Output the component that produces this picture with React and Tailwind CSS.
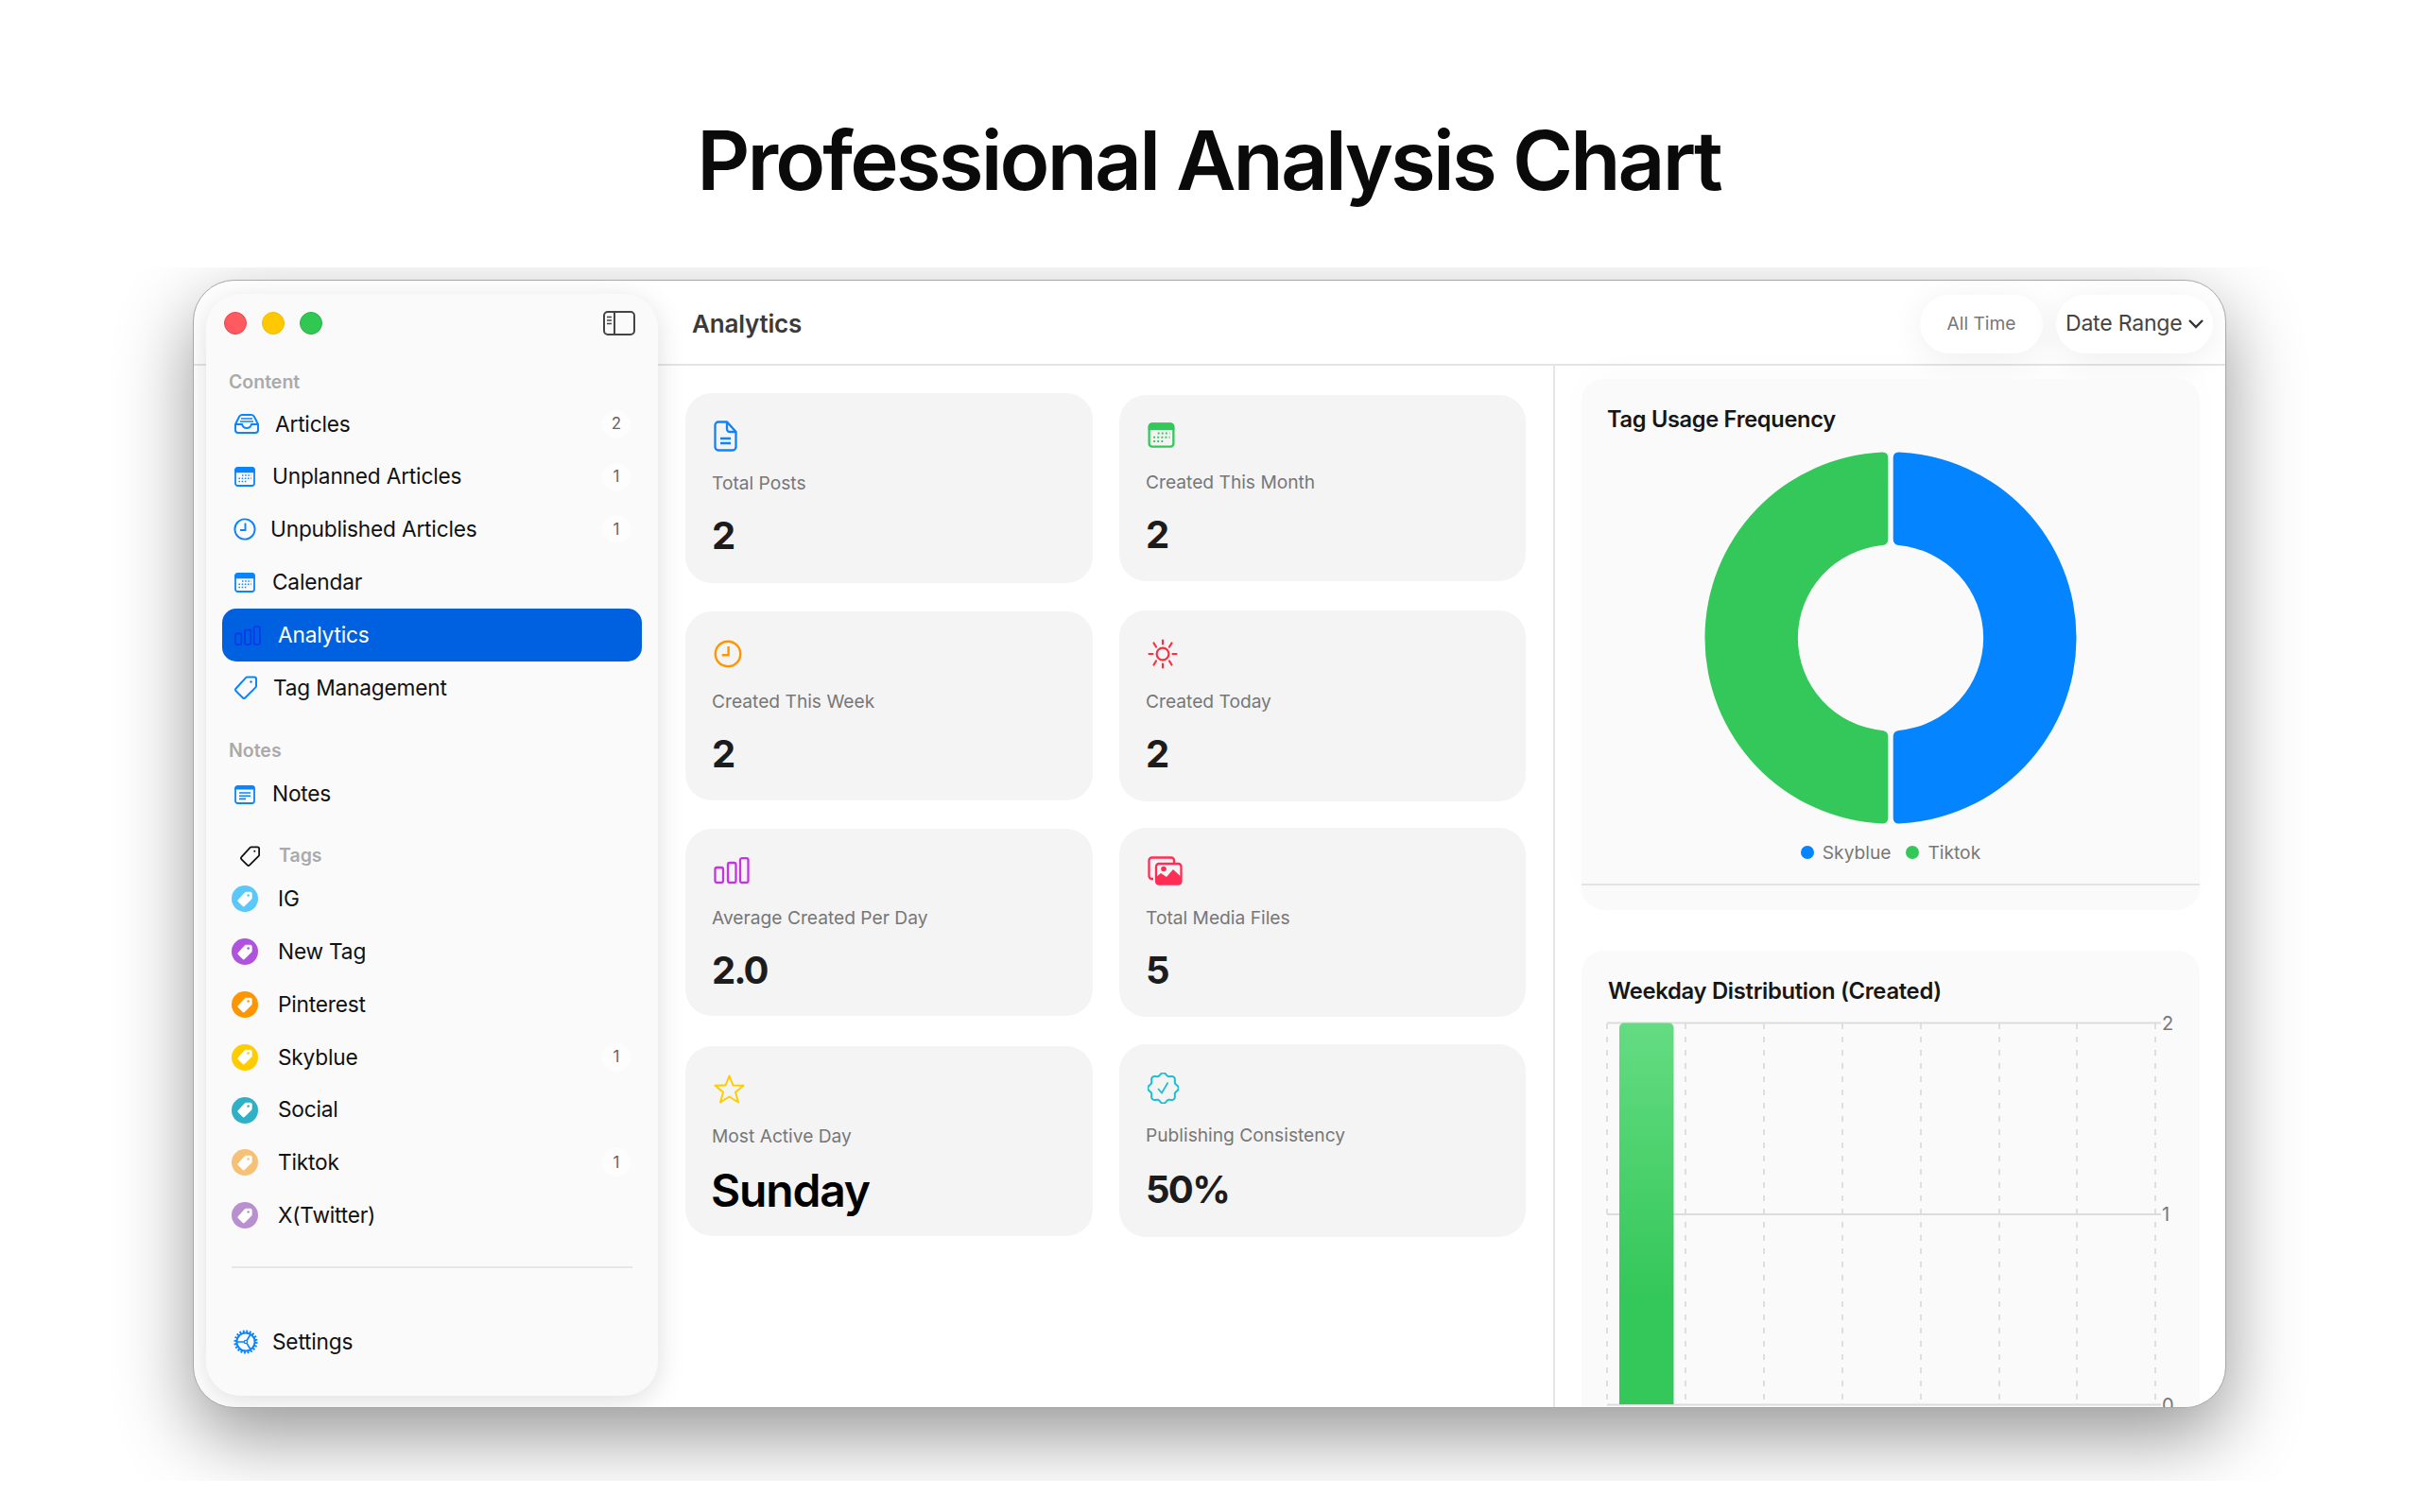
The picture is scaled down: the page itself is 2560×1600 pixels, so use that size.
import React from "react";

const Inbox = () => (
  <svg width="26" height="21" viewBox="0 0 26 21" fill="none" stroke="#0a84ff" strokeWidth="2">
    <path d="M1 11 L5 3 Q6 1 8 1 H18 Q20 1 21 3 L25 11 V17 Q25 20 22 20 H4 Q1 20 1 17 Z" />
    <path d="M1 11 H8 Q9 15 13 15 Q17 15 18 11 H25" />
    <path d="M7 5 H19 M6 8 H20" strokeWidth="1.6" />
  </svg>
);
const Cal = ({ c = "#0a84ff", w = 22, h = 21 }) => (
  <svg width={w} height={h} viewBox="0 0 22 21" fill="none">
    <rect x="1" y="1" width="20" height="19" rx="2.5" stroke={c} strokeWidth="1.8" />
    <path d="M1 5.5 V3.5 A2.5 2.5 0 0 1 3.5 1 H18.5 A2.5 2.5 0 0 1 21 3.5 V5.5 Z" fill={c} stroke={c} strokeWidth="1.4" />
    <g stroke={c} strokeWidth="1.5" strokeDasharray="1.5 1.7">
      <path d="M8 9 H18" />
      <path d="M4.5 12.2 H18" />
      <path d="M4.5 15.6 H14" />
    </g>
  </svg>
);
const Clock = ({ c = "#0a84ff", s = 24 }) => (
  <svg width={s} height={s} viewBox="0 0 24 24" fill="none" stroke={c} strokeWidth="1.9">
    <circle cx="12" cy="12" r="10.6" />
    <path d="M12.5 5.5 V13 H7" />
  </svg>
);
const Bars = ({ c, w, h }) => (
  <svg width={w} height={h} viewBox="0 0 38 28" fill="none" stroke={c} strokeWidth="2.3">
    <rect x="1.5" y="11" width="8.5" height="16" rx="2" />
    <rect x="15" y="6" width="8.5" height="21" rx="2" />
    <rect x="28" y="1.2" width="8.5" height="25.8" rx="2" />
  </svg>
);
const TAG = "M13.5 1.5 H21 a2 2 0 0 1 2 2 V11 a2 2 0 0 1 -.6 1.4 L11.5 23.3 a2 2 0 0 1 -2.8 0 L1.7 16.3 a2 2 0 0 1 0 -2.8 L12.1 2.1 a2 2 0 0 1 1.4 -.6 z";
const TagOutline = ({ c, w = 24, h = 25 }) => (
  <svg width={w} height={h} viewBox="0 0 24 25" fill="none" stroke={c} strokeWidth="2">
    <path d={TAG} />
    <circle cx="17.5" cy="6.5" r="1.2" fill={c} stroke="none" />
  </svg>
);
const NoteIcon = () => (
  <svg width="22" height="20" viewBox="0 0 22 20" fill="none" stroke="#0a84ff">
    <rect x="1" y="1" width="20" height="18" rx="2.5" strokeWidth="1.8" />
    <path d="M1 4 V3.5 A2.5 2.5 0 0 1 3.5 1 H18.5 A2.5 2.5 0 0 1 21 3.5 V4 Z" fill="#0a84ff" strokeWidth="1.2" />
    <path d="M5 8 H17 M5 11.2 H17 M5 14.4 H12" strokeWidth="1.6" />
  </svg>
);
const Gear = () => (
  <svg width="26" height="26" viewBox="0 0 26 26" fill="none" stroke="#0a84ff">
    <circle cx="13" cy="13" r="11.3" strokeWidth="2.6" strokeDasharray="1.9 1.65" />
    <circle cx="13" cy="13" r="9.6" strokeWidth="2" />
    <circle cx="13" cy="13" r="1.7" strokeWidth="1.3" />
    <path d="M3.5 13 H11.3 M14 11.6 L18 5 M14 14.4 L18 21" strokeWidth="1.7" />
  </svg>
);
const TagDot = ({ c }) => (
  <span className="flex h-7 w-7 items-center justify-center rounded-full" style={{ backgroundColor: c }}>
    <svg width="16" height="17" viewBox="0 0 24 25">
      <path d={TAG} fill="#fff" stroke="#fff" strokeWidth="1" />
      <circle cx="17.5" cy="6.5" r="2" fill={c} />
    </svg>
  </span>
);
const Doc = () => (
  <svg width="25" height="33" viewBox="0 0 25 33" fill="none" stroke="#0a84ff" strokeWidth="2.3">
    <path d="M5 1.5 H14 L23.5 12 V28 A3.5 3.5 0 0 1 20 31.5 H5 A3.5 3.5 0 0 1 1.5 28 V5 A3.5 3.5 0 0 1 5 1.5 Z" />
    <path d="M14 1.5 V9 A3 3 0 0 0 17 12 H23.5" />
    <path d="M7 19 H18 M7 24 H18" />
  </svg>
);
const Sun = () => (
  <svg width="32" height="32" viewBox="0 0 32 32" fill="none" stroke="#ff2d3f" strokeWidth="2.2" strokeLinecap="round">
    <circle cx="16" cy="16" r="6.4" />
    <path d="M16 1.5 V5.5 M16 26.5 V30.5 M1.5 16 H5.5 M26.5 16 H30.5 M6.5 4.5 L9 8.5 M25.5 4.5 L23 8.5 M6.5 27.5 L9 23.5 M25.5 27.5 L23 23.5" />
  </svg>
);
const Media = () => (
  <svg width="37" height="31" viewBox="0 0 37 31" fill="none">
    <path d="M6 24 H4.5 A3 3 0 0 1 1.5 21 V4.5 A3 3 0 0 1 4.5 1.5 H25 A3 3 0 0 1 28 4.5 V7" stroke="#ff2d55" strokeWidth="2.3" />
    <rect x="9" y="8" width="26.5" height="21.5" rx="3" stroke="#ff2d55" strokeWidth="2.3" />
    <circle cx="17" cy="13.5" r="2.8" fill="#ff2d55" />
    <path d="M9 29.5 V22 L14 18 L20 22 L27 14 L35.5 22 V29.5 Z" fill="#ff2d55" />
  </svg>
);
const Star = () => (
  <svg width="33" height="31" viewBox="0 0 33 31" fill="none" stroke="#ffcc00" strokeWidth="2" strokeLinejoin="round">
    <polygon points="16.5,1.5 20.5,11.5 31.5,11.7 23,18.7 26,29.5 16.5,23.5 7,29.5 10,18.7 1.5,11.7 12.5,11.5" />
  </svg>
);
const scallop = Array.from({ length: 97 }, (_, i) => {
  const a = (i / 96) * Math.PI * 2 - Math.PI / 2;
  const r = 14.9 + 1.4 * Math.cos(8 * (a + Math.PI / 2));
  return `${(16.5 + r * Math.cos(a)).toFixed(2)},${(16.5 + r * Math.sin(a)).toFixed(2)}`;
}).join(" ");
const Badge = () => (
  <svg width="33" height="33" viewBox="0 0 33 33" fill="none" stroke="#19bfd2" strokeWidth="2">
    <polyline points={scallop} />
    <path d="M11 17 L15 21.5 L21.5 10.5" strokeWidth="1.7" />
  </svg>
);

const Row = ({ icon, w, label, badge, active }) => (
  <div className={`mx-[17px] flex h-[55.8px] items-center rounded-[15px] pl-[13px] pr-[12px] ${active ? "bg-[#0061e0] text-white" : "text-[#111]"}`}>
    <span className={`flex shrink-0 items-center ${w}`}>{icon}</span>
    <span className="text-[22.7px] leading-none tracking-[-0.2px]">{label}</span>
    {badge && <span className="ml-auto flex h-[30px] w-[30px] items-center justify-center rounded-full bg-[#fdfdfd] text-[17px] text-[#666]">{badge}</span>}
  </div>
);
const TagRow = ({ c, label, badge }) => (
  <div className="mx-[17px] flex h-[55.8px] items-center pl-[10px] pr-[12px] text-[#111]">
    <span className="flex w-[49px] shrink-0 items-center"><TagDot c={c} /></span>
    <span className="text-[22.7px] leading-none tracking-[-0.2px]">{label}</span>
    {badge && <span className="ml-auto flex h-[30px] w-[30px] items-center justify-center rounded-full bg-[#fdfdfd] text-[17px] text-[#666]">{badge}</span>}
  </div>
);
const Section = ({ className, children }) => (
  <div className={`flex h-7 items-center text-[19.5px] font-semibold leading-none text-[#aaaaaa] ${className}`}>{children}</div>
);

const Sidebar = () => (
  <aside className="relative z-10 ml-[13px] mt-[14px] mb-[12px] flex w-[478px] shrink-0 flex-col rounded-[36px] bg-[#fafafa] shadow-[0_6px_30px_rgba(0,0,0,0.13)]">
    <div className="flex h-[62px] items-center justify-between pl-[19px] pr-[24px]">
      <div className="flex gap-4">
        <span className="h-6 w-6 rounded-full border border-[#e8474c] bg-[#ff5a5f]" />
        <span className="h-6 w-6 rounded-full border border-[#f0bb00] bg-[#ffc800]" />
        <span className="h-6 w-6 rounded-full border border-[#25b545] bg-[#30c752]" />
      </div>
      <svg width="34" height="26" viewBox="0 0 34 26" fill="none" stroke="#444" strokeWidth="2">
        <rect x="1" y="1" width="32" height="24" rx="4" />
        <path d="M12 1 V25" />
        <path d="M4 6.5 H9 M4 10 H9 M4 13.5 H9" strokeWidth="1.6" />
      </svg>
    </div>
    <Section className="ml-[24px] mt-[18px]">Content</Section>
    <div className="mt-[2px]">
      <Row icon={<Inbox />} w="w-[43px]" label="Articles" badge="2" />
      <Row icon={<Cal />} w="w-[40px]" label="Unplanned Articles" badge="1" />
      <Row icon={<span className="-ml-[1px]"><Clock /></span>} w="w-[38px]" label="Unpublished Articles" badge="1" />
      <Row icon={<Cal />} w="w-[40px]" label="Calendar" />
      <Row icon={<Bars c="#0a38ea" w={28} h={21} />} w="w-[46px]" label="Analytics" active />
      <Row icon={<TagOutline c="#0a84ff" />} w="w-[41px]" label="Tag Management" />
    </div>
    <Section className="ml-[24px] mt-[25px]">Notes</Section>
    <div className="mt-[4px]">
      <Row icon={<NoteIcon />} w="w-[40px]" label="Notes" />
    </div>
    <div className="mt-[23px] flex h-7 items-center pl-[36px]">
      <span className="flex w-[41px] items-center"><TagOutline c="#111" w={21} h={22} /></span>
      <span className="text-[19.5px] font-semibold leading-none text-[#aaaaaa]">Tags</span>
    </div>
    <div className="mt-[4px]">
      <TagRow c="#5ac8fa" label="IG" />
      <TagRow c="#af52de" label="New Tag" />
      <TagRow c="#ff9500" label="Pinterest" />
      <TagRow c="#ffcc00" label="Skyblue" badge="1" />
      <TagRow c="#30b0c7" label="Social" />
      <TagRow c="#f6c177" label="Tiktok" badge="1" />
      <TagRow c="#b88fcf" label="X(Twitter)" />
    </div>
    <div className="mx-[27px] mt-[26px] h-[2px] bg-[#e6e6e6]" />
    <div className="mt-[50px]">
      <Row icon={<span className="-ml-[1px]"><Gear /></span>} w="w-[40px]" label="Settings" />
    </div>
  </aside>
);

const Card = ({ cls, icon, label, value, vcls = "mt-[20px] text-[40px] font-bold text-[#1c1c1c] tracking-[-0.5px]" }) => (
  <div className={`flex flex-col rounded-[28px] bg-[#f4f4f4] pl-[28px] ${cls}`}>
    <div className="flex h-9 items-center pl-[2px]">{icon}</div>
    <div className="mt-[20px] flex h-[26px] items-center text-[19.2px] leading-none text-[#777]">{label}</div>
    <div className={`flex h-[44px] items-center leading-none ${vcls}`}>{value}</div>
  </div>
);

const a = 196.7, b = 98.3;
const half = (s, sw, sw2) =>
  `M${s * 8.7} ${-a + 0.2} A${a} ${a} 0 0 ${sw} ${s * 8.7} ${a - 0.2} Q${s * 2.7} ${a - 0.3} ${s * 2.7} ${a - 6.3} L${s * 2.7} ${b + 6.2} Q${s * 2.7} ${b + 0.3} ${s * 8.7} ${b - 0.4} A${b} ${b} 0 0 ${sw2} ${s * 8.7} ${-b + 0.4} Q${s * 2.7} ${-b - 0.3} ${s * 2.7} ${-b - 6.2} L${s * 2.7} ${-a + 6.3} Q${s * 2.7} ${-a + 0.3} ${s * 8.7} ${-a + 0.2} Z`;

const Donut = () => (
  <svg width="400" height="400" viewBox="-200 -200 400 400" className="mx-auto mt-[15px] block">
    <path d={half(1, 1, 0)} fill="#0584ff" />
    <path d={half(-1, 0, 1)} fill="#34c759" />
  </svg>
);

const WeekChart = () => (
  <svg width="620" height="440" viewBox="0 0 620 440" className="ml-[23px] mt-[7px] block">
    <defs>
      <linearGradient id="bar" x1="0" y1="0" x2="0" y2="1">
        <stop offset="0" stopColor="#64dc82" />
        <stop offset="0.72" stopColor="#34c759" />
        <stop offset="1" stopColor="#34c759" />
      </linearGradient>
    </defs>
    {[4, 87, 170, 253, 336, 419, 501, 584].map((x) => (
      <line key={x} x1={x} x2={x} y1="11" y2="414" stroke="#d9d9d9" strokeWidth="1.6" strokeDasharray="6 8" />
    ))}
    {[10.5, 213, 414.5].map((y) => (
      <line key={y} x1="4" x2="590" y1={y} y2={y} stroke="#dcdcdc" strokeWidth="2" />
    ))}
    <path d="M17 414 V15.5 A5 5 0 0 1 22 10.5 H69.5 A5 5 0 0 1 74.5 15.5 V414 Z" fill="url(#bar)" />
    <g fontSize="20" fill="#777" fontFamily="Inter, sans-serif">
      <text x="591" y="18">2</text>
      <text x="591" y="220">1</text>
      <text x="591" y="422">0</text>
    </g>
  </svg>
);

export default function App() {
  return (
    <div className="h-[1600px] w-[2560px] overflow-hidden bg-white font-['Inter',sans-serif]">
      <h1 className="flex h-[283px] justify-center pr-[3px] pt-[56px] text-[87px] font-semibold leading-[228px] tracking-[-2.85px] text-[#0a0a0a]">
        <span className="h-[227px]">Professional Analysis Chart</span>
      </h1>
      <div className="h-[1284px] overflow-hidden pl-[204px] pt-[13px]">
        <div className="relative flex h-[1194px] w-[2151px] overflow-hidden rounded-[44px] border border-[#a8a8a8] bg-white shadow-[0_30px_80px_rgba(0,0,0,0.41)]">
          <Sidebar />
          <main className="flex min-w-0 flex-1 flex-col">
            <header className="flex h-[90px] shrink-0 items-center justify-between border-b-2 border-[#e4e4e4] pl-[36px] pr-[13px] pt-[3px]">
              <span className="text-[26px] font-semibold tracking-[-0.2px] text-[#3a3a3a]">Analytics</span>
              <div className="flex items-center gap-[14px]">
                <span className="flex h-[62px] w-[130px] items-center justify-center rounded-[31px] bg-white text-[19.2px] text-[#777] shadow-[0_6px_36px_rgba(0,0,0,0.07)]">All Time</span>
                <span className="flex h-[62px] w-[166px] items-center gap-[6px] rounded-[31px] bg-white pl-[10px] text-[23px] tracking-[-0.2px] text-[#444] shadow-[0_6px_36px_rgba(0,0,0,0.07)]">
                  Date Range
                  <svg width="18" height="11" viewBox="0 0 18 11" fill="none" stroke="#333" strokeWidth="2.4"><path d="M2 2 L9 9 L16 2" /></svg>
                </span>
              </div>
            </header>
            <div className="flex min-h-0 flex-1">
              <div className="flex w-[947px] shrink-0 gap-[28px] pl-[29px]">
                <div className="flex w-[431px] shrink-0 flex-col pt-[29px]">
                  <Card cls="mb-[30px] h-[201px] pt-[27px]" icon={<Doc />} label="Total Posts" value="2" />
                  <Card cls="mb-[30px] h-[200px] pt-[27px]" icon={<Clock c="#ff9500" s={30} />} label="Created This Week" value="2" />
                  <Card cls="mb-[32px] h-[198px] pt-[26px]" icon={<Bars c="#c832e6" w={38} h={28} />} label="Average Created Per Day" value="2.0" vcls="mt-[20px] text-[40px] font-bold text-[#1c1c1c] tracking-[-2px]" />
                  <Card cls="h-[201px] pt-[27px]" icon={<Star />} label="Most Active Day" value="Sunday" vcls="-ml-[1px] mt-[22px] text-[48px] font-semibold text-black tracking-[-1.2px]" />
                </div>
                <div className="flex w-[430px] shrink-0 flex-col pt-[31px]">
                  <Card cls="mb-[31px] h-[197px] pt-[24px]" icon={<Cal c="#34c759" w={29} h={27} />} label="Created This Month" value="2" />
                  <Card cls="mb-[28px] h-[202px] pt-[28px]" icon={<Sun />} label="Created Today" value="2" />
                  <Card cls="mb-[29px] h-[200px] pt-[27px]" icon={<Media />} label="Total Media Files" value="5" />
                  <Card cls="h-[204px] pt-[28px]" icon={<Badge />} label="Publishing Consistency" value="50%" vcls="mt-[22px] text-[40px] font-bold text-[#1c1c1c] tracking-[-1.7px]" />
                </div>
              </div>
              <div className="flex-1 border-l-2 border-[#e6e6e6] pl-[28px] pr-[27px] pt-[14px]">
                <section className="h-[562px] overflow-hidden rounded-[24px] bg-[#fafafa] shadow-[0_-10px_40px_rgba(0,0,0,0.015)]">
                  <h2 className="ml-[27px] mt-[27px] flex h-8 items-center text-[23.6px] font-semibold leading-none tracking-[-0.3px] text-[#161616]">Tag Usage Frequency</h2>
                  <Donut />
                  <div className="mt-[13px] flex h-7 items-center justify-center text-[19.2px] text-[#777]">
                    <span className="h-[14px] w-[14px] rounded-full bg-[#0584ff]" />
                    <span className="ml-[9px]">Skyblue</span>
                    <span className="ml-[16px] h-[14px] w-[14px] rounded-full bg-[#34c759]" />
                    <span className="ml-[9px]">Tiktok</span>
                  </div>
                  <div className="mt-[19px] h-[2px] bg-[#e4e4e4]" />
                </section>
                <section className="mt-[43px] h-[600px] rounded-[24px] bg-[#fafafa]">
                  <h2 className="ml-[28px] pt-[27px] flex h-[59px] items-center text-[23.8px] font-semibold leading-none tracking-[-0.3px] text-[#161616]">Weekday Distribution (Created)</h2>
                  <WeekChart />
                </section>
              </div>
            </div>
          </main>
          <span className="absolute left-0 top-[88px] h-[2px] w-[13px] bg-[#e4e4e4]" />
        </div>
      </div>
    </div>
  );
}
